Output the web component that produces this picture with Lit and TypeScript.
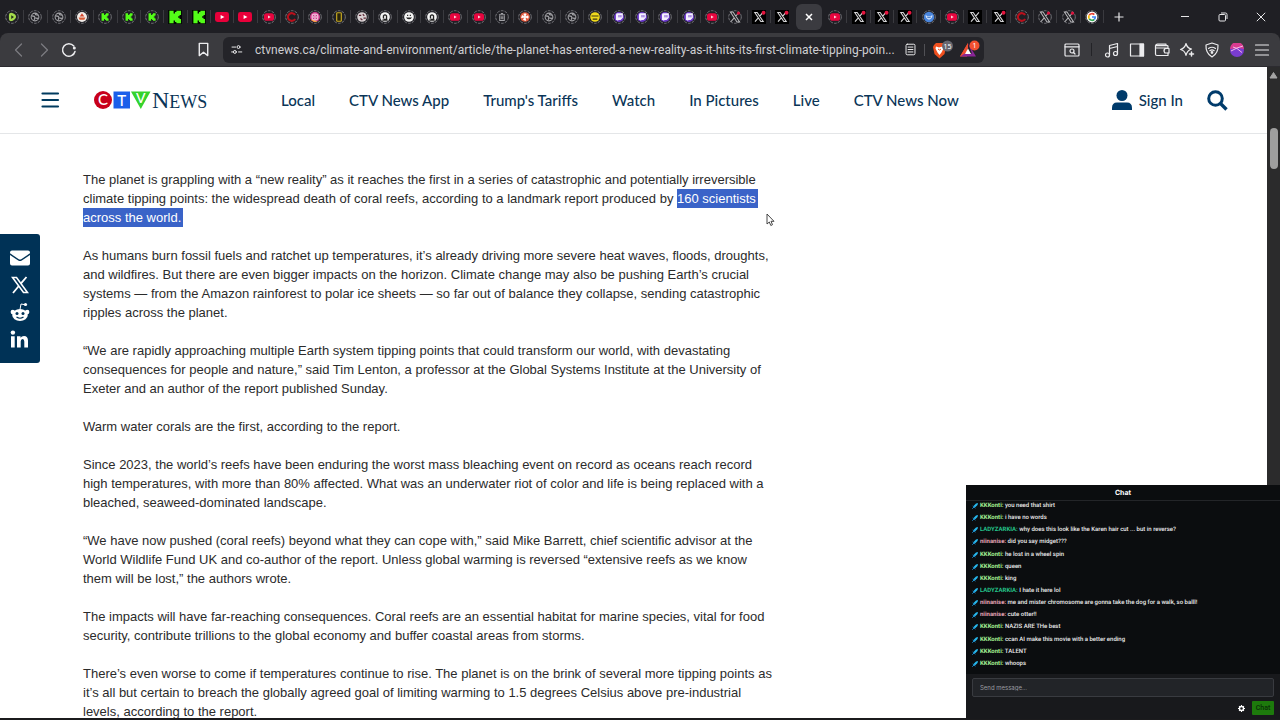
import { LitElement, html, css, svg } from "lit";
import { customElement } from "lit/decorators.js";
import { classMap } from "lit/directives/class-map.js";

const X_PATH = "M4 3.5h3.4l8.6 13h-3.4z M15.6 3.5L10.8 9 M9 11.2L4.3 16.5";

const marks: Record<string, unknown> = {
  rumble: svg`<path d="M6 7.500q0-3 3-3q5 1 6 4q1 2-1 4q-3 3-5.500 3q-2.500-.5-2.500-3z" fill="#a5dc4c"/><path d="M9 7.700l3.500 2.300-3.500 2.500z" fill="#1f2a18"/>`,
  globe: svg`<circle cx="10" cy="10" r="5" fill="none" stroke="#a3a3a7" stroke-width="1.400"/><path d="M6 8.500l3 .5 1 2-1 2.500M14 7.500l-3-.5-1-2M11 11.500l3 .2" fill="none" stroke="#a3a3a7" stroke-width="1.700"/>`,
  peak: svg`<circle cx="10" cy="10" r="6.500" fill="#f2ece8"/><path d="M10 5l3 4.500H7z" fill="#d4452b"/><path d="M5.500 10.500h9l-1.500 3h-6z" fill="#d95b35"/>`,
  kick: svg`<path d="M5.500 5h3.300v2.500h1.300V6.300h1.200V5h3.400v3.200h-1.200v1.200h-1.200v1.200h1.200v1.200h1.200V15h-3.400v-1.200h-1.200v-1.300H8.800V15H5.500z" fill="#53fc18"/>`,
  kickFull: svg`<rect width="20" height="20" fill="#050805"/><path d="M2 1h6v4h2V3h2V1h6.500v6h-2v2h-2v2h2v2h2v6H12v-2h-2v-2H8v4H2z" fill="#53fc18"/>`,
  youtube: svg`<rect x="0" y="3" width="20" height="14" rx="3.500" fill="#e8003a"/><path d="M8 7l5.500 3L8 13z" fill="#fff"/>`,
  tube: svg`<rect x="3.500" y="5" width="13" height="10" rx="3.500" fill="#e8063f"/><path d="M8.800 8l3.400 2-3.400 2z" fill="#ffd9e0"/>`,
  redC: svg`<path d="M14 7.500A5 5 0 1 0 14 12.500" fill="none" stroke="#b8101c" stroke-width="2.800"/>`,
  insta: svg`<circle cx="10" cy="10" r="6.500" fill="#d13a8c"/><path d="M4.500 13a6.500 6.500 0 0 0 9 2.500z" fill="#f7a13a"/><rect x="6.300" y="6.300" width="7.400" height="7.400" rx="2.200" fill="none" stroke="#fff" stroke-width="1.200"/><circle cx="10" cy="10" r="1.700" fill="none" stroke="#fff"/>`,
  card: svg`<rect x="7" y="4.500" width="6" height="11" rx="1" fill="#29240b" stroke="#c9ab22" stroke-width="1.500"/>`,
  dice: svg`<circle cx="10" cy="10" r="6.200" fill="#d9d2d4"/><path d="M6 8h3M11 6.500l2 2M8 12l2.500 2M12 11.500h3" stroke="#5c2633" stroke-width="1.600"/>`,
  archive: svg`<circle cx="10" cy="10" r="6.300" fill="#f4f4f4"/><path d="M8 12V8.500q2-2.500 4 0V13H8.300M6.500 14h7" fill="none" stroke="#222" stroke-width="1.700"/>`,
  smile: svg`<circle cx="10" cy="10" r="6.300" fill="#f4f4f4"/><path d="M6 10.500q4 5 8 0z" fill="#222"/><path d="M7.500 8h1.500M11 8h1.500" stroke="#222" stroke-width="1.600"/>`,
  bin: svg`<path d="M6 7h8M8.500 5.300h3M7 8v6.500h6V8M9 9v4M11 9v4" fill="none" stroke="#a3a3a7" stroke-width="1.300"/>`,
  flower: svg`<circle cx="10" cy="10" r="6.300" fill="#e0563a"/><path d="M10 10l-1.500-4 3 0zM10 10l4-1.500 0 3zM10 10l1 4.500-3-1zM10 10l-4.500 1 1-3z" fill="#fff" stroke="#fff"/>`,
  face: svg`<circle cx="10" cy="10" r="6.200" fill="#f0da1d"/><path d="M5.500 8h9v1.500h-9zM7 12h6v1.500H7z" fill="#3b3413"/>`,
  twitch: svg`<circle cx="10" cy="10" r="6.500" fill="#6a39c9"/><path d="M7 5h8v6l-3 3H9.500L8 15.500V14H6V7z" fill="#f5f0ff"/><path d="M10 7.500v3M12.500 7.500v3" stroke="#6a39c9" stroke-width="1.200"/>`,
  xDot: svg`<path d="${X_PATH}" fill="none" stroke="#b9b9bc" stroke-width="1.300"/><circle cx="14.500" cy="5" r="2" fill="#d9123c"/>`,
  xFull: svg`<rect width="20" height="20" fill="#000"/><path d="${X_PATH}" fill="none" stroke="#d5d5d7" stroke-width="1.600"/>`,
  xFullDot: svg`<rect width="20" height="20" fill="#000"/><path d="${X_PATH}" fill="none" stroke="#d5d5d7" stroke-width="1.600"/><circle cx="16.500" cy="4" r="2.800" fill="#e5153f"/>`,
  bird: svg`<circle cx="10" cy="10" r="6.800" fill="#4a86dd"/><path d="M5.500 7.500q4.500 3.500 9 0q0 5-4.500 6q-4.500-1-4.500-6z" fill="#cfe2fb"/><path d="M7.500 10q2.500 2 5 0" stroke="#2c5fae" fill="none"/>`,
  google: svg`<circle cx="10" cy="10" r="7" fill="#fff"/><g fill="none" stroke-width="2.200"><path d="M13 7A4.200 4.200 0 0 0 6.400 7.800" stroke="#ea4335"/><path d="M6.400 7.800A4.200 4.200 0 0 0 6.400 12.200" stroke="#fbbc05"/><path d="M6.400 12.200A4.200 4.200 0 0 0 13 13" stroke="#34a853"/><path d="M13 13a4.200 4.200 0 0 0 1.200-3H10" stroke="#4285f4"/></g>`,
};

const unringed = new Set(["kickFull", "youtube", "xFull", "xFullDot"]);

const tabs =
  "rumble globe globe peak kick kick kick kickFull kickFull youtube youtube tube redC insta card dice archive smile archive tube tube bin flower globe globe face twitch twitch twitch twitch tube xDot xFullDot xFullDot active tube xFullDot xFullDot xFullDot bird tube xFull xFullDot redC xDot xDot google".split(
    " ",
  );

const sections = ["Local", "CTV News App", "Trump's Tariffs", "Watch", "In Pictures", "Live", "CTV News Now"];

const paragraphs = [
  "As humans burn fossil fuels and ratchet up temperatures, it’s already driving more severe heat waves, floods, droughts, and wildfires. But there are even bigger impacts on the horizon. Climate change may also be pushing Earth’s crucial systems — from the Amazon rainforest to polar ice sheets — so far out of balance they collapse, sending catastrophic ripples across the planet.",
  "“We are rapidly approaching multiple Earth system tipping points that could transform our world, with devastating consequences for people and nature,” said Tim Lenton, a professor at the Global Systems Institute at the University of Exeter and an author of the report published Sunday.",
  "Warm water corals are the first, according to the report.",
  "Since 2023, the world’s reefs have been enduring the worst mass bleaching event on record as oceans reach record high temperatures, with more than 80% affected. What was an underwater riot of color and life is being replaced with a bleached, seaweed-dominated landscape.",
  "“We have now pushed (coral reefs) beyond what they can cope with,” said Mike Barrett, chief scientific advisor at the World Wildlife Fund UK and co-author of the report. Unless global warming is reversed “extensive reefs as we know them will be lost,” the authors wrote.",
  "The impacts will have far-reaching consequences. Coral reefs are an essential habitat for marine species, vital for food security, contribute trillions to the global economy and buffer coastal areas from storms.",
  "There’s even worse to come if temperatures continue to rise. The planet is on the brink of several more tipping points as it’s all but certain to breach the globally agreed goal of limiting warming to 1.5 degrees Celsius above pre-industrial levels, according to the report.",
];

const messages: [string, string, string][] = [
  ["KKKonti", "lime", "you need that shirt"],
  ["KKKonti", "lime", "i have no words"],
  ["LADYZARKIA", "teal", "why does this look like the Karen hair cut ... but in reverse?"],
  ["niinanise", "pink", "did you say midget???"],
  ["KKKonti", "lime", "he lost in a wheel spin"],
  ["KKKonti", "lime", "queen"],
  ["KKKonti", "lime", "king"],
  ["LADYZARKIA", "teal", "I hate it here lol"],
  ["niinanise", "pink", "me and mister chromosome are gonna take the dog for a walk, so balll!"],
  ["niinanise", "pink", "cute otter!!"],
  ["KKKonti", "lime", "NAZIS ARE THe best"],
  ["KKKonti", "lime", "ccan AI make this movie with a better ending"],
  ["KKKonti", "lime", "TALENT"],
  ["KKKonti", "lime", "whoops"],
];

const resets = css`
  :host { display: block; }
  * { box-sizing: border-box; }
  svg { display: block; flex: none; }
  button { border: 0; margin: 0; padding: 0; background: none; color: inherit; font: inherit; display: flex; align-items: center; justify-content: center; }
  a { color: inherit; text-decoration: none; }
`;

@customElement("tab-strip")
class TabStrip extends LitElement {
  static styles = [resets, css`
    .strip { display: flex; height: 33px; background: #1f1f24; color: #e6e6e8; }
    .tabs { flex: 1; display: flex; align-items: center; padding-left: 1px; min-width: 0; }
    .tab { flex: 1 1 0; min-width: 0; height: 13px; border-right: 1px solid #3a3a3f; }
    .tab.plain { border-color: transparent; }
    .active { flex: none; width: 26px; height: 26px; margin: 0 2px; border-radius: 6px; background: #3b3b40; }
    .end { display: flex; width: 176px; align-items: center; }
    .new { width: 30px; height: 26px; }
    .window { flex: 1; display: flex; padding-left: 32px; }
    .window button { flex: 1; height: 33px; }
  `];

  render() {
    return html`<div class="strip">
      <div class="tabs">
        ${tabs.map((name, i) =>
          name === "active"
            ? html`<button class="active" aria-label="Close tab"><svg width="8" height="8" viewBox="0 0 8 8"><path d="M1 1l6 6M7 1L1 7" stroke="#fff" stroke-width="1.500"/></svg></button>`
            : html`<button class=${classMap({ tab: true, plain: tabs[i + 1] === "active" })} aria-label="Tab ${i + 1}">
                <svg width="14" height="14" viewBox="0 0 20 20">
                  ${unringed.has(name)
                    ? marks[name]
                    : svg`<circle cx="10" cy="10" r="9" fill="none" stroke="#7d7d82" stroke-width="1.300" stroke-dasharray="4 1.650"/><g transform="translate(-1 -1) scale(1.100)">${marks[name]}</g>`}
                </svg>
              </button>`,
        )}
      </div>
      <div class="end">
        <button class="new" aria-label="New tab"><svg width="10" height="10" viewBox="0 0 10 10"><path d="M5 .5v9M.5 5h9" stroke="#e6e6e8" stroke-width="1.200"/></svg></button>
        <div class="window">
          <button aria-label="Minimise"><svg width="10" height="10" viewBox="0 0 10 10"><path d="M1 4.500h8" stroke="#e6e6e8"/></svg></button>
          <button aria-label="Restore"><svg width="10" height="10" viewBox="0 0 10 10" fill="none" stroke="#e6e6e8"><rect x="1" y="2.500" width="6.500" height="6.500" rx="1"/><path d="M3 1h4.500a1.500 1.500 0 0 1 1.500 1.500v4.500"/></svg></button>
          <button aria-label="Close"><svg width="10" height="10" viewBox="0 0 10 10"><path d="M.8.8l8.400 8.400M9.200.8L.8 9.200" stroke="#e6e6e8"/></svg></button>
        </div>
      </div>
    </div>`;
  }
}

@customElement("address-bar")
class AddressBar extends LitElement {
  static styles = [resets, css`
    .frame { background: #1f1f24; }
    .bar { display: flex; align-items: center; height: 34px; padding: 0 6px; background: #3b3b3f; border-radius: 8px 8px 0 0; border-bottom: 1px solid #2c2b30; color: #ececee; }
    .cell { width: 25px; height: 26px; }
    .left { display: flex; width: 217px; padding-right: 7px; }
    .mark { margin-left: auto; }
    .url { flex: 1; min-width: 0; display: flex; align-items: center; height: 26px; border-radius: 6px; background: #242429; padding: 0 0 0 7px; }
    .text { flex: 1; min-width: 0; height: 26px; margin: 0 0 0 12px; padding: 0; border: 0; outline: 0; background: none; color: #cfcfd2; font: 12px/26px "Roboto", sans-serif; text-overflow: ellipsis; }
    .rule { width: 1px; height: 12px; background: #505055; margin: 0 3px 0 1px; }
    .badged { width: 28px; height: 26px; }
    .right { display: flex; align-items: center; margin-left: 75px; }
    .gap { width: 1px; height: 13px; margin: 0 7px; background: #232327; }
  `];

  render() {
    const icon = (body: unknown, size = 16) =>
      html`<svg width=${size} height=${size} viewBox="0 0 16 16" fill="none" stroke="currentColor" stroke-width="1.200" stroke-linejoin="round" stroke-linecap="round">${body}</svg>`;
    return html`<div class="frame"><div class="bar">
      <div class="left">
        <button class="cell" aria-label="Back">${icon(svg`<path d="M10.500 2L4.500 8l6 6" stroke="#7d7d82"/>`)}</button>
        <button class="cell" aria-label="Forward">${icon(svg`<path d="M5.500 2l6 6-6 6" stroke="#7d7d82"/>`)}</button>
        <button class="cell" aria-label="Reload">${icon(svg`<path d="M14 9.500A6.300 6.300 0 1 1 12.800 4" stroke-width="1.500"/><circle cx="13.300" cy="6" r="1.500" fill="currentColor" stroke="none"/>`)}</button>
        <button class="cell mark" aria-label="Bookmark">${icon(svg`<path d="M3.500 1.500h9v13L8 11l-4.500 3.500z" stroke-width="1.500"/>`, 15)}</button>
      </div>
      <div class="url">
        ${icon(svg`<path d="M2.500 5H7M10.500 11H14.500M2 11h2"/><circle cx="10.500" cy="5" r="1.800"/><circle cx="6" cy="11" r="1.800"/>`, 13)}
        <input class="text" aria-label="Address" readonly value="ctvnews.ca/climate-and-environment/article/the-planet-has-entered-a-new-reality-as-it-hits-its-first-climate-tipping-poin..." />
        <button class="cell" aria-label="Reader mode">${icon(svg`<rect x="2.500" y="1.500" width="11" height="13" rx="1.500"/><path d="M5 5h6M5 8h6M5 11h6"/>`, 13)}</button>
        <span class="rule"></span>
        <button class="badged" aria-label="Shields, 15 blocked">
          <svg width="24" height="20" viewBox="0 0 24 20"><path d="M4 5l2-2h7l2 2 1 2-1.500 7-5 4.500L4.500 14 3 7z" fill="#f0501f"/><path d="M6 6.500l3 1 3.500-1 1 2-2 4-2 2.500-2-2.500-2-4z" fill="#fff"/><path d="M8 9l1.500 1L11 9" stroke="#f0501f" fill="none"/><circle cx="17.500" cy="6" r="5.500" fill="#66666e"/><text x="17.500" y="8.500" text-anchor="middle" font-family="Noto Sans" font-size="7" fill="#fff">15</text></svg>
        </button>
        <button class="badged" aria-label="Rewards, 1 new">
          <svg width="24" height="20" viewBox="0 0 24 20"><path d="M10 3L2 16.500h7z" fill="#f2542d"/><path d="M10 3l8 13.500H2l4-3h8z" fill="#8a2597"/><path d="M2 16.500l8-13.500v5l-4 6z" fill="#ee4d31"/><path d="M10 8.500l3 5.500H7z" fill="#fff"/><circle cx="16.500" cy="5.500" r="5" fill="#f2502f"/><text x="16.500" y="8" text-anchor="middle" font-family="Noto Sans" font-size="7" fill="#fff">1</text></svg>
        </button>
      </div>
      <div class="right">
        <button class="cell" aria-label="Search tabs">${icon(svg`<rect x="1" y="2" width="14" height="12" rx="1"/><path d="M1 4.800h14M9.500 10.500l1.500 1.500"/><circle cx="8" cy="9" r="2"/>`)}</button>
        <span class="gap"></span>
        <button class="cell" aria-label="Music">${icon(svg`<circle cx="3.500" cy="13" r="2"/><circle cx="11.500" cy="11.500" r="2"/><path d="M5.500 13V3.500l8-2v10M5.500 6.500l8-2"/>`)}</button>
        <button class="cell" aria-label="Sidebar">${icon(svg`<rect x="1.500" y="2" width="13" height="12"/><path d="M11 2h3.500v12H11z" fill="currentColor"/>`)}</button>
        <button class="cell" aria-label="Wallet">${icon(svg`<path d="M14 6V4.500q0-.8-.8-.8H1.500V12q0 1.500 1.500 1.500h11V11M1.500 3.700Q2 2.200 3.500 2.200H12v1.500M1.500 6H14"/><path d="M15 6.500v4.500h-4q-2-2.200 0-4.500z"/>`)}</button>
        <button class="cell" aria-label="Assistant">${icon(svg`<path d="M7 1.500q1 4.500 5.500 5.500Q8 8.500 7 13.500 6 8.500 1.500 7.500 6 6 7 1.500z"/><path d="M12.500 10v4M10.500 12h4" stroke-width="1.500"/>`)}</button>
        <button class="cell" aria-label="Protection">${icon(svg`<path d="M8 1l6 2q.5 8-6 12-6.500-4-6-12z"/><path d="M4.500 6.500q3.500-2.500 7 0M5.800 8.700q2.200-1.600 4.400 0"/><circle cx="8" cy="10.500" r=".8" fill="currentColor"/>`)}</button>
        <button class="cell" aria-label="Profile"><svg width="14" height="14" viewBox="0 0 14 14"><circle cx="7" cy="7" r="7" fill="#7a3cd0"/><path d="M0 6a7 7 0 0 1 14 0L9 5z" fill="#d93c8f"/><path d="M1 8l6-3 6-2M3 4l4 1.500 5 4" fill="none" stroke="#f6b9e6"/></svg></button>
        <button class="cell" aria-label="Menu">${icon(svg`<path d="M1.500 3h13M1.500 8h13M1.500 13h13"/>`)}</button>
      </div>
    </div></div>`;
  }
}

@customElement("site-header")
class SiteHeader extends LitElement {
  static styles = [resets, css`
    .header { display: flex; align-items: center; height: 67px; padding: 0 39px 0 40px; border-bottom: 1px solid #e4e6e8; background: #fff; color: #0a3557; font: 500 15px/20px "Lato", sans-serif; }
    .menu { width: 20px; height: 20px; margin-right: 33px; }
    .logo { margin-right: 64px; }
    .nav { flex: 1; display: flex; gap: 34px; white-space: nowrap; }
    .sign { gap: 7px; margin-right: 24px; }
  `];

  render() {
    return html`<header class="header">
      <button class="menu" aria-label="Menu"><svg width="20" height="20" viewBox="0 0 20 20"><path d="M2.500 3.500h15.500M2.500 10h15.500M2.500 16.500h15.500" stroke="#003b5f" stroke-width="2.200" stroke-linecap="round"/></svg></button>
      <a class="logo" href="#" aria-label="CTV News">
        <svg width="124" height="30" viewBox="0 -4 124 30">
          <circle cx="10" cy="11" r="9" fill="#c8001a"/><path d="M20.500 2.500H37V19.500H20.500z" fill="#1b5fea"/><path d="M38 2.500h19.500L47.800 20z" fill="#35d32c"/>
          <g font-family="Lato" fill="#fff" text-anchor="middle"><text x="10" y="16" font-size="15">C</text><text x="28.800" y="16.500" font-size="15">T</text><text x="47.800" y="14" font-size="14">V</text></g>
          <text x="59" y="19" font-family="Liberation Serif" font-size="24" fill="#0a3557">N<tspan font-size="18">EWS</tspan></text>
        </svg>
      </a>
      <nav class="nav">${sections.map((s) => html`<a href="#">${s}</a>`)}</nav>
      <button class="sign"><svg width="20" height="20" viewBox="0 0 20 20" fill="#003b6b"><circle cx="10" cy="5.500" r="5.500"/><path d="M0 20v-2q0-5.500 5-5.500h10q5 0 5 5.500v2z"/></svg>Sign In</button>
      <button aria-label="Search"><svg width="21" height="21" viewBox="0 0 21 21" fill="none" stroke="#003b6b"><circle cx="8.500" cy="8.500" r="6.800" stroke-width="3"/><path d="M13.500 13.500l6 6" stroke-width="3.400"/></svg></button>
    </header>`;
  }
}

@customElement("share-rail")
class ShareRail extends LitElement {
  static styles = [resets, css`
    .rail { display: flex; flex-direction: column; align-items: center; justify-content: space-between; gap: 7px; width: 40px; padding: 14px 0; background: #003256; border-radius: 0 3px 3px 0; }
  `];

  render() {
    return html`<nav class="rail" aria-label="Share">
      <a href="#" aria-label="Email"><svg width="20" height="20" viewBox="0 0 20 20" fill="#fff"><path d="M2 2.500h16q2 0 2 2v.8l-8.800 5.900q-1.200.8-2.400 0L0 5.300v-.8q0-2 2-2z"/><path d="M0 7l8.200 5.500q1.800 1.100 3.600 0L20 7v8.500q0 2-2 2H2q-2 0-2-2z"/></svg></a>
      <a href="#" aria-label="X"><svg width="18" height="20" viewBox="0 0 18 20" fill="none" stroke="#fff"><path d="M1.500 2.500h4L16.500 17.500h-4z" stroke-width="1.600"/><path d="M15.500 2L9.800 8.600M7.800 11L2 18" stroke-width="1.800"/></svg></a>
      <a href="#" aria-label="Reddit"><svg width="20" height="20" viewBox="0 0 20 20"><g fill="#fff"><ellipse cx="10" cy="13" rx="7.800" ry="6"/><circle cx="2.800" cy="10" r="2.200"/><circle cx="17.200" cy="10" r="2.200"/><circle cx="15.500" cy="2.500" r="1.600"/></g><path d="M10 7.500l1-5.500 4 .7" fill="none" stroke="#fff"/><circle cx="7" cy="11.500" r="1.500" fill="#003256"/><circle cx="13" cy="11.500" r="1.500" fill="#003256"/><path d="M6.500 15q3.500 2.500 7 0" fill="none" stroke="#003256" stroke-width="1.200"/></svg></a>
      <a href="#" aria-label="LinkedIn"><svg width="20" height="20" viewBox="0 0 20 20" fill="#fff"><circle cx="2.900" cy="3.600" r="2.200"/><path d="M1 7.300h3.700V18.500H1zM7 7.300h3.500v1.500q1.100-1.800 3.500-1.800 4 0 4 4.800v6.700h-3.700v-6q0-2.500-1.700-2.500-1.900 0-1.900 2.500v6H7z"/></svg></a>
    </nav>`;
  }
}

@customElement("chat-panel")
class ChatPanel extends LitElement {
  static styles = [resets, css`
    .panel { display: flex; flex-direction: column; height: 234px; background: #0b0d0f; color: #eee; font: 500 6px/12px "Roboto", sans-serif; text-rendering: geometricPrecision; }
    .title { height: 16px; margin: 0; border-bottom: 1px solid #232528; font: 700 7px/16px "Inter", sans-serif; text-align: center; color: #fff; }
    .list { flex: 1; display: flex; flex-direction: column; justify-content: space-between; margin: 0; padding: 0 6px 5px; list-style: none; }
    .row { display: flex; align-items: center; gap: 2px; height: 10px; line-height: 10px; white-space: pre; }
    .name { font-weight: 700; }
    .lime { color: #a3f293; }
    .teal { color: #25c48a; }
    .pink { color: #e3a3b4; }
    .form { display: flex; flex-direction: column; gap: 4px; height: 45px; padding: 4px 6px; background: #18191c; }
    .field { width: 100%; height: 19px; padding: 0 7px; border: 1px solid #393b40; border-radius: 2px; background: #222428; font: 400 6px/17px "Inter", sans-serif; outline: 0; }
    .field::placeholder { color: #9b9ca0; }
    .actions { display: flex; justify-content: flex-end; align-items: center; gap: 7px; }
    .send { width: 22px; height: 14px; border-radius: 1px; background: #1d7a0c; color: #0a2f08; font-size: 7px; }
  `];

  render() {
    return html`<section class="panel" aria-label="Chat">
      <h2 class="title">Chat</h2>
      <ul class="list">
        ${messages.map(([name, tone, text]) => html`<li class="row"><svg width="6" height="6" viewBox="0 0 6 6"><path d="M6 0L5.500 2 3 4.500 1.500 3 4 .5z" fill="#27b9ee"/><path d="M.7 2.800l2.500 2.500M2 4L.3 5.700" stroke="#1c8fd0" stroke-width="1"/></svg><span><span class="name ${tone}">${name}:</span> ${text}</span></li>`)}
      </ul>
      <form class="form">
        <input class="field" aria-label="Send message" placeholder="Send message..." />
        <div class="actions">
          <button type="button" aria-label="Settings"><svg width="7" height="7" viewBox="0 0 8 8"><circle cx="4" cy="4" r="2.300" fill="none" stroke="#fff" stroke-width="1.600"/><path d="M4 0v1.500M4 6.500V8M0 4h1.500M6.500 4H8M1.200 1.200l1 1M5.800 5.800l1 1M6.800 1.200l-1 1M2.200 5.800l-1 1" stroke="#fff" stroke-width="1.300"/></svg></button>
          <button type="button" class="send">Chat</button>
        </div>
      </form>
    </section>`;
  }
}

@customElement("app-root")
class AppRoot extends LitElement {
  static styles = [resets, css`
    .window { position: relative; display: flex; flex-direction: column; height: 100vh; overflow: hidden; background: #1b1b1d; padding-bottom: 2px; }
    .view { flex: 1; min-height: 0; display: flex; }
    .page { position: relative; flex: 1; min-width: 0; overflow: hidden; background: #fff; }
    .story { max-width: 777px; padding: 36px 0 0 83px; color: #2b2b2b; font: 13px/19px "Liberation Sans", Arial, sans-serif; }
    .story p { margin: 0 0 19px; }
    .picked { background: #3a63c8; color: #fff; padding: 2px 2px 2px 0; }
    .rail { position: absolute; left: 0; top: 167px; }
    .scroll { width: 13px; display: flex; flex-direction: column; align-items: center; padding-top: 4px; background: #2b2b2c; }
    .thumb { width: 8px; height: 41px; margin-top: 49px; border-radius: 4px; background: #9e9e9e; }
    .cursor { position: absolute; left: 766px; top: 213px; }
    .chat { position: absolute; right: 0; bottom: 1px; width: 314px; }
  `];

  render() {
    return html`<div class="window">
      <tab-strip></tab-strip>
      <address-bar></address-bar>
      <div class="view">
        <main class="page">
          <site-header></site-header>
          <article class="story">
            <p>The planet is grappling with a “new reality” as it reaches the first in a series of catastrophic and potentially irreversible climate tipping points: the widespread death of coral reefs, according to a landmark report produced by <span class="picked">160 scientists</span> <span class="picked">across the world.</span></p>
            ${paragraphs.map((p) => html`<p>${p}</p>`)}
          </article>
          <share-rail class="rail"></share-rail>
        </main>
        <div class="scroll"><svg width="9" height="8" viewBox="0 0 9 8"><path d="M4.500 1.500L8 7H1z" fill="#a5a5a5" stroke="#a5a5a5" stroke-linejoin="round"/></svg><div class="thumb"></div></div>
      </div>
      <svg class="cursor" width="9" height="14" viewBox="0 0 9 14"><path d="M1 1v10l2.300-2 1.500 3.500 1.700-.8L5 8.300h3z" fill="#fff" stroke="#333" stroke-width=".9"/></svg>
      <chat-panel class="chat"></chat-panel>
    </div>`;
  }
}
